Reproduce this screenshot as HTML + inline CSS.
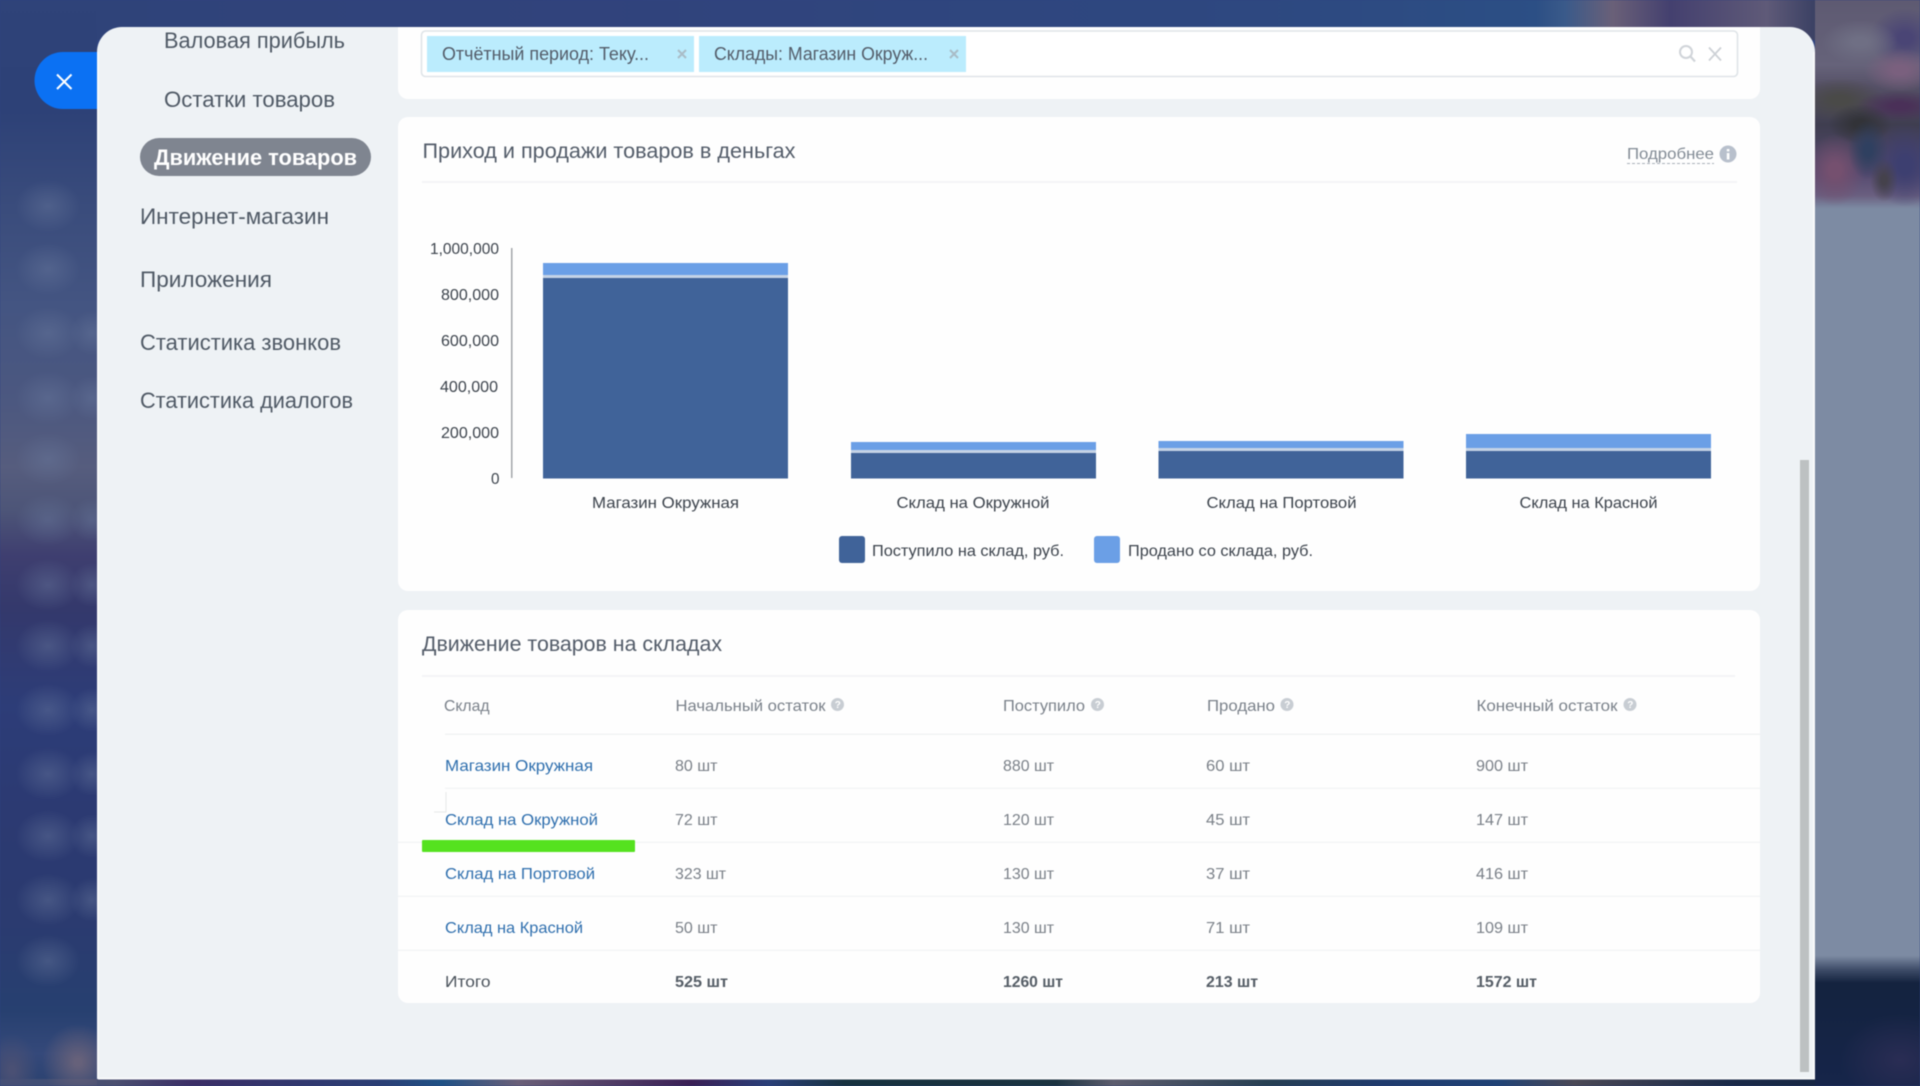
<!DOCTYPE html>
<html lang="ru">
<head>
<meta charset="utf-8">
<title>Движение товаров</title>
<style>
html,body{margin:0;padding:0;width:1920px;height:1086px;overflow:hidden;background:#2f4480}
svg{display:block;filter:blur(.45px)}
text{font-family:"Liberation Sans","DejaVu Sans",sans-serif}
.side{font-size:22px;fill:#4f5965}
.tag{font-size:18px;fill:#535c69}
.h{font-size:21px;fill:#535c69}
.ax{font-size:16px;fill:#3c434c}
.lb{font-size:16px;fill:#3c434c}
.th{font-size:16px;fill:#7a818a}
.td{font-size:16px;fill:#7a8088}
.a{font-size:16px;fill:#2f6fae}
.b{font-size:16px;fill:#555d66;font-weight:bold}
.q{font-size:10px;fill:#fff;font-weight:bold}
</style>
</head>
<body>
<svg width="1920" height="1086" viewBox="0 0 1920 1086" xmlns="http://www.w3.org/2000/svg">
<defs>
<linearGradient id="left" x1="0" y1="0" x2="0" y2="1">
<stop offset="0" stop-color="#2f4379"/>
<stop offset=".1" stop-color="#2d4177"/>
<stop offset=".19" stop-color="#3a4c7c"/>
<stop offset=".28" stop-color="#445582"/>
<stop offset=".37" stop-color="#4c5880"/>
<stop offset=".43" stop-color="#565d7e"/>
<stop offset=".47" stop-color="#4d5578"/>
<stop offset=".51" stop-color="#3f3f70"/>
<stop offset=".56" stop-color="#34396c"/>
<stop offset=".65" stop-color="#2d3d78"/>
<stop offset=".75" stop-color="#2c3a72"/>
<stop offset=".85" stop-color="#2b3b70"/>
<stop offset=".93" stop-color="#274070"/>
<stop offset=".97" stop-color="#35497a"/>
<stop offset="1" stop-color="#2b4270"/>
</linearGradient>
<linearGradient id="top" x1="0" y1="0" x2="1" y2="0">
<stop offset="0" stop-color="#2f4379"/>
<stop offset=".3" stop-color="#31437c"/>
<stop offset=".65" stop-color="#2e4880"/>
<stop offset=".8" stop-color="#2c4f85"/>
<stop offset=".815" stop-color="#3a5a8a"/>
<stop offset=".84" stop-color="#6a6078"/>
<stop offset=".87" stop-color="#44406f"/>
<stop offset=".92" stop-color="#5f5a78"/>
<stop offset=".95" stop-color="#343c60"/>
<stop offset="1" stop-color="#5a5a74"/>
</linearGradient>
<linearGradient id="bot" x1="0" y1="0" x2="1" y2="0">
<stop offset="0" stop-color="#3c4f78"/>
<stop offset=".06" stop-color="#4b4f70"/>
<stop offset=".1" stop-color="#3b2e66"/>
<stop offset=".2" stop-color="#2a3f75"/>
<stop offset=".23" stop-color="#1f5185"/>
<stop offset=".27" stop-color="#6a5f78"/>
<stop offset=".36" stop-color="#3a1f55"/>
<stop offset=".4" stop-color="#2a3f78"/>
<stop offset=".44" stop-color="#17323f"/>
<stop offset=".55" stop-color="#1b3340"/>
<stop offset=".58" stop-color="#5d5d6e"/>
<stop offset=".66" stop-color="#273f52"/>
<stop offset=".72" stop-color="#1f3b6d"/>
<stop offset=".78" stop-color="#1f4275"/>
<stop offset=".82" stop-color="#4a4855"/>
<stop offset=".9" stop-color="#1a2a48"/>
<stop offset="1" stop-color="#14233f"/>
</linearGradient>
<linearGradient id="rcol" x1="0" y1="0" x2="0" y2="1">
<stop offset="0" stop-color="#5e5a72"/>
<stop offset=".06" stop-color="#66637a"/>
<stop offset=".08" stop-color="#555066"/>
<stop offset=".115" stop-color="#3f3e50"/>
<stop offset=".16" stop-color="#564a70"/>
<stop offset=".18" stop-color="#6a5f80"/>
<stop offset=".192" stop-color="#7d8ba3"/>
<stop offset=".88" stop-color="#7d8ba3"/>
<stop offset=".893" stop-color="#3e4c68"/>
<stop offset=".905" stop-color="#14233f"/>
<stop offset="1" stop-color="#16254a"/>
</linearGradient>
<radialGradient id="blob"><stop offset="0" stop-color="#6b7b9f" stop-opacity=".42"/><stop offset=".5" stop-color="#6b7b9f" stop-opacity=".22"/><stop offset="1" stop-color="#6b7b9f" stop-opacity="0"/></radialGradient>
<radialGradient id="g1"><stop offset=".2" stop-color="#4a4575"/><stop offset="1" stop-color="#4a4575" stop-opacity="0"/></radialGradient>
<radialGradient id="g2"><stop offset=".2" stop-color="#6f6f84"/><stop offset="1" stop-color="#6f6f84" stop-opacity="0"/></radialGradient>
<radialGradient id="g3"><stop offset=".2" stop-color="#7a607e"/><stop offset="1" stop-color="#7a607e" stop-opacity="0"/></radialGradient>
<radialGradient id="g4"><stop offset=".2" stop-color="#4a4a48"/><stop offset="1" stop-color="#4a4a48" stop-opacity="0"/></radialGradient>
<radialGradient id="g5"><stop offset=".2" stop-color="#4a3058"/><stop offset="1" stop-color="#4a3058" stop-opacity="0"/></radialGradient>
<radialGradient id="g6"><stop offset=".2" stop-color="#323338"/><stop offset="1" stop-color="#323338" stop-opacity="0"/></radialGradient>
<radialGradient id="g7"><stop offset=".2" stop-color="#2f4060"/><stop offset="1" stop-color="#2f4060" stop-opacity="0"/></radialGradient>
<radialGradient id="g8"><stop offset=".2" stop-color="#3d3f70"/><stop offset="1" stop-color="#3d3f70" stop-opacity="0"/></radialGradient>
<radialGradient id="g9"><stop offset=".2" stop-color="#75506f"/><stop offset="1" stop-color="#75506f" stop-opacity="0"/></radialGradient>
<radialGradient id="g10"><stop offset=".2" stop-color="#45424c"/><stop offset="1" stop-color="#45424c" stop-opacity="0"/></radialGradient>
<radialGradient id="g11"><stop offset=".1" stop-color="#66617a"/><stop offset="1" stop-color="#66617a" stop-opacity="0"/></radialGradient>
<radialGradient id="g12"><stop offset=".1" stop-color="#4a5074"/><stop offset="1" stop-color="#4a5074" stop-opacity="0"/></radialGradient>
<radialGradient id="g13"><stop offset="0" stop-color="#2a2d54"/><stop offset="1" stop-color="#2a2d54" stop-opacity="0"/></radialGradient>
<clipPath id="panel"><path d="M97 1079V52a25 25 0 0 1 25-25H1790a25 25 0 0 1 25 25V1079Z"/></clipPath>
<clipPath id="right"><rect x="1815" y="0" width="105" height="1086"/></clipPath>
<clipPath id="rtop"><rect x="1815" y="0" width="105" height="206"/></clipPath>
<clipPath id="leftc"><rect x="0" y="0" width="97" height="1086"/></clipPath>
</defs>

<!-- background -->
<rect width="1920" height="1086" fill="#2f4480"/>
<rect x="0" y="0" width="1920" height="40" fill="url(#top)"/>
<rect x="0" y="0" width="97" height="1086" fill="url(#left)"/>
<rect x="0" y="1079" width="1920" height="7" fill="url(#bot)"/>
<g clip-path="url(#leftc)" fill="url(#blob)">
<ellipse cx="48" cy="206" rx="32" ry="26"/><ellipse cx="48" cy="269" rx="32" ry="26"/><ellipse cx="48" cy="333" rx="32" ry="26"/><ellipse cx="48" cy="398" rx="32" ry="26"/>
<ellipse cx="48" cy="459" rx="32" ry="26"/><ellipse cx="48" cy="520" rx="32" ry="26"/><ellipse cx="48" cy="585" rx="32" ry="26"/><ellipse cx="48" cy="646" rx="32" ry="26"/>
<ellipse cx="48" cy="710" rx="32" ry="26"/><ellipse cx="48" cy="774" rx="32" ry="26"/><ellipse cx="48" cy="836" rx="32" ry="26"/><ellipse cx="48" cy="900" rx="32" ry="26"/><ellipse cx="48" cy="961" rx="32" ry="26"/>
<ellipse cx="92" cy="333" rx="22" ry="22"/><ellipse cx="92" cy="398" rx="22" ry="22"/><ellipse cx="92" cy="520" rx="22" ry="22"/><ellipse cx="92" cy="585" rx="22" ry="22"/><ellipse cx="92" cy="646" rx="22" ry="22"/><ellipse cx="92" cy="710" rx="22" ry="22"/><ellipse cx="92" cy="774" rx="22" ry="22"/><ellipse cx="92" cy="836" rx="22" ry="22"/><ellipse cx="92" cy="900" rx="22" ry="22"/>
</g>
<g clip-path="url(#leftc)">
<ellipse cx="78" cy="1062" rx="36" ry="38" fill="url(#g11)"/>
<ellipse cx="12" cy="1070" rx="26" ry="36" fill="url(#g12)"/>
</g>
<g clip-path="url(#right)">
<rect x="1815" y="0" width="105" height="1086" fill="url(#rcol)"/>
<ellipse cx="1900" cy="1060" rx="60" ry="45" fill="url(#g13)"/>
</g>
<g clip-path="url(#rtop)">
<ellipse cx="1905" cy="38" rx="36" ry="30" fill="url(#g1)"/>
<ellipse cx="1860" cy="42" rx="38" ry="22" fill="url(#g2)"/>
<ellipse cx="1900" cy="70" rx="36" ry="22" fill="url(#g3)"/>
<ellipse cx="1840" cy="100" rx="44" ry="22" fill="url(#g4)"/>
<ellipse cx="1900" cy="106" rx="44" ry="16" fill="url(#g5)"/>
<ellipse cx="1860" cy="124" rx="32" ry="20" fill="url(#g6)"/>
<ellipse cx="1835" cy="170" rx="30" ry="36" fill="url(#g9)"/>
<ellipse cx="1905" cy="165" rx="34" ry="42" fill="url(#g8)"/>
<ellipse cx="1868" cy="150" rx="20" ry="30" fill="url(#g7)"/>
<ellipse cx="1884" cy="180" rx="14" ry="22" fill="url(#g10)"/>
</g>

<!-- close button -->
<path d="M97 52H63a28.500 28.500 0 0 0 0 57H97Z" fill="#0b71f3"/>
<path d="M57 74.500L71.500 89M71.500 74.500L57 89" stroke="#fff" stroke-width="2" fill="none"/>

<!-- panel -->
<path d="M97 1079V52a25 25 0 0 1 25-25H1790a25 25 0 0 1 25 25V1079Z" fill="#eef2f5"/>
<path d="M98 1078.500V52M1814 52V1078.500H98" stroke="#f8f9fa" stroke-width="2" fill="none"/>

<g clip-path="url(#panel)">
<!-- sidebar -->
<text class="side" x="164" y="48" textLength="181" lengthAdjust="spacingAndGlyphs">Валовая прибыль</text>
<text class="side" x="164" y="107" textLength="171" lengthAdjust="spacingAndGlyphs">Остатки товаров</text>
<rect x="140" y="138" width="231" height="38" rx="19" fill="#7f8590"/>
<text class="side" x="154" y="165" textLength="203" lengthAdjust="spacingAndGlyphs" style="fill:#fff;font-weight:bold">Движение товаров</text>
<text class="side" x="140" y="224" textLength="189" lengthAdjust="spacingAndGlyphs">Интернет-магазин</text>
<text class="side" x="140" y="287" textLength="132" lengthAdjust="spacingAndGlyphs">Приложения</text>
<text class="side" x="140" y="350" textLength="201" lengthAdjust="spacingAndGlyphs">Статистика звонков</text>
<text class="side" x="140" y="408" textLength="213" lengthAdjust="spacingAndGlyphs">Статистика диалогов</text>

<!-- filter card -->
<path d="M398 27H1760V89a10 10 0 0 1-10 10H408a10 10 0 0 1-10-10Z" fill="#fefefe"/>
<rect x="421.500" y="31" width="1316" height="45.500" rx="4" fill="#fff" stroke="#dfe4e8" stroke-width="1.600"/>
<rect x="427" y="36" width="267" height="36" fill="#bbecfd"/>
<text class="tag" x="442" y="60" textLength="207" lengthAdjust="spacingAndGlyphs">Отчётный период: Теку...</text>
<path d="M678 50L686 58M686 50L678 58" stroke="#a9bcc6" stroke-width="2"/>
<rect x="699" y="36" width="267" height="36" fill="#bbecfd"/>
<text class="tag" x="714" y="60" textLength="214" lengthAdjust="spacingAndGlyphs">Склады: Магазин Окруж...</text>
<path d="M950 50L958 58M958 50L950 58" stroke="#a9bcc6" stroke-width="2"/>
<circle cx="1686" cy="52" r="6" fill="none" stroke="#d0d4d9" stroke-width="2"/>
<path d="M1690.500 56.500L1695 61.500" stroke="#d0d4d9" stroke-width="2.200"/>
<path d="M1709 47.500L1721 60.500M1721 47.500L1709 60.500" stroke="#cdd1d6" stroke-width="1.800"/>

<!-- chart card -->
<rect x="398" y="117" width="1362" height="474" rx="10" fill="#fefefe"/>
<text class="h" x="422.500" y="158" textLength="373" lengthAdjust="spacingAndGlyphs">Приход и продажи товаров в деньгах</text>
<text x="1627" y="159" font-size="16" fill="#828b95" textLength="87" lengthAdjust="spacingAndGlyphs">Подробнее</text>
<path d="M1627 163.500H1714" stroke="#a8afb8" stroke-width="1" stroke-dasharray="3 2"/>
<circle cx="1728" cy="154" r="8.500" fill="#b8c0cc"/>
<rect x="1726.800" y="153" width="2.600" height="6.500" fill="#fff"/><rect x="1726.800" y="149" width="2.600" height="2.400" fill="#fff"/>
<rect x="422" y="181" width="1315" height="2" fill="#f3f4f6"/>

<rect x="511" y="248" width="1.500" height="230" fill="#a3a6aa"/>
<text class="ax" x="430" y="254" textLength="69" lengthAdjust="spacingAndGlyphs">1,000,000</text>
<text class="ax" x="441" y="300" textLength="58" lengthAdjust="spacingAndGlyphs">800,000</text>
<text class="ax" x="441" y="346" textLength="58" lengthAdjust="spacingAndGlyphs">600,000</text>
<text class="ax" x="440" y="392" textLength="58" lengthAdjust="spacingAndGlyphs">400,000</text>
<text class="ax" x="441" y="438" textLength="58" lengthAdjust="spacingAndGlyphs">200,000</text>
<text class="ax" x="491" y="484" textLength="8.500" lengthAdjust="spacingAndGlyphs">0</text>
<rect x="543" y="263" width="245" height="12" fill="#6b9fe6"/><rect x="543" y="278" width="245" height="200.500" fill="#406399"/>
<rect x="851" y="442" width="245" height="8" fill="#6b9fe6"/><rect x="851" y="453" width="245" height="25.500" fill="#406399"/>
<rect x="1158.500" y="441" width="245" height="7" fill="#6b9fe6"/><rect x="1158.500" y="451" width="245" height="27.500" fill="#406399"/>
<rect x="1466" y="434" width="245" height="14" fill="#6b9fe6"/><rect x="1466" y="451" width="245" height="27.500" fill="#406399"/>
<rect x="543" y="275" width="245" height="3" fill="#c5d3e6"/><rect x="851" y="450" width="245" height="3" fill="#c5d3e6"/><rect x="1158.500" y="448" width="245" height="3" fill="#c5d3e6"/><rect x="1466" y="448" width="245" height="3" fill="#c5d3e6"/>

<text class="lb" x="592" y="508" textLength="147" lengthAdjust="spacingAndGlyphs">Магазин Окружная</text>
<text class="lb" x="896.500" y="508" textLength="153" lengthAdjust="spacingAndGlyphs">Склад на Окружной</text>
<text class="lb" x="1206.500" y="508" textLength="150" lengthAdjust="spacingAndGlyphs">Склад на Портовой</text>
<text class="lb" x="1519.500" y="508" textLength="138" lengthAdjust="spacingAndGlyphs">Склад на Красной</text>

<rect x="839" y="536" width="26" height="27" rx="3" fill="#406399"/>
<text class="lb" x="872" y="556" textLength="192" lengthAdjust="spacingAndGlyphs">Поступило на склад, руб.</text>
<rect x="1094" y="536" width="26" height="27" rx="3" fill="#6b9fe6"/>
<text class="lb" x="1128" y="556" textLength="185" lengthAdjust="spacingAndGlyphs">Продано со склада, руб.</text>

<!-- table card -->
<rect x="398" y="610" width="1362" height="393" rx="10" fill="#fefefe"/>
<text class="h" x="422" y="651" textLength="300" lengthAdjust="spacingAndGlyphs">Движение товаров на складах</text>
<rect x="422" y="675" width="1313" height="2" fill="#f3f4f6"/>

<text class="th" x="444" y="711" textLength="45.500" lengthAdjust="spacingAndGlyphs">Склад</text>
<text class="th" x="675.500" y="711" textLength="150" lengthAdjust="spacingAndGlyphs">Начальный остаток</text>
<circle cx="837.500" cy="704.500" r="6.500" fill="#c8cdd3"/><text class="q" x="834.800" y="708">?</text>
<text class="th" x="1003" y="711" textLength="82" lengthAdjust="spacingAndGlyphs">Поступило</text>
<circle cx="1097.500" cy="704.500" r="6.500" fill="#c8cdd3"/><text class="q" x="1094.800" y="708">?</text>
<text class="th" x="1207" y="711" textLength="68" lengthAdjust="spacingAndGlyphs">Продано</text>
<circle cx="1287" cy="704.500" r="6.500" fill="#c8cdd3"/><text class="q" x="1284.300" y="708">?</text>
<text class="th" x="1476.500" y="711" textLength="141" lengthAdjust="spacingAndGlyphs">Конечный остаток</text>
<circle cx="1630" cy="704.500" r="6.500" fill="#c8cdd3"/><text class="q" x="1627.300" y="708">?</text>

<rect x="445" y="733.500" width="1315" height="1.500" fill="#f1f3f4"/>
<rect x="445" y="787.500" width="1315" height="1.500" fill="#f4f5f6"/>
<rect x="398" y="841.500" width="1362" height="1.500" fill="#f4f5f6"/>
<rect x="398" y="895.500" width="1362" height="1.500" fill="#f4f5f6"/>
<rect x="398" y="949.500" width="1362" height="1.500" fill="#f4f5f6"/>

<text class="a" x="445" y="771" textLength="148" lengthAdjust="spacingAndGlyphs">Магазин Окружная</text>
<text class="td" x="675" y="771" textLength="42.500" lengthAdjust="spacingAndGlyphs">80 шт</text>
<text class="td" x="1003" y="771" textLength="51" lengthAdjust="spacingAndGlyphs">880 шт</text>
<text class="td" x="1206" y="771" textLength="44" lengthAdjust="spacingAndGlyphs">60 шт</text>
<text class="td" x="1476" y="771" textLength="52" lengthAdjust="spacingAndGlyphs">900 шт</text>

<text class="a" x="445" y="825" textLength="153" lengthAdjust="spacingAndGlyphs">Склад на Окружной</text>
<text class="td" x="675" y="825" textLength="42.500" lengthAdjust="spacingAndGlyphs">72 шт</text>
<text class="td" x="1003" y="825" textLength="51" lengthAdjust="spacingAndGlyphs">120 шт</text>
<text class="td" x="1206" y="825" textLength="44" lengthAdjust="spacingAndGlyphs">45 шт</text>
<text class="td" x="1476" y="825" textLength="52" lengthAdjust="spacingAndGlyphs">147 шт</text>

<text class="a" x="445" y="879" textLength="150" lengthAdjust="spacingAndGlyphs">Склад на Портовой</text>
<text class="td" x="675" y="879" textLength="51" lengthAdjust="spacingAndGlyphs">323 шт</text>
<text class="td" x="1003" y="879" textLength="51" lengthAdjust="spacingAndGlyphs">130 шт</text>
<text class="td" x="1206" y="879" textLength="44" lengthAdjust="spacingAndGlyphs">37 шт</text>
<text class="td" x="1476" y="879" textLength="52" lengthAdjust="spacingAndGlyphs">416 шт</text>

<text class="a" x="445" y="933" textLength="138" lengthAdjust="spacingAndGlyphs">Склад на Красной</text>
<text class="td" x="675" y="933" textLength="42.500" lengthAdjust="spacingAndGlyphs">50 шт</text>
<text class="td" x="1003" y="933" textLength="51" lengthAdjust="spacingAndGlyphs">130 шт</text>
<text class="td" x="1206" y="933" textLength="44" lengthAdjust="spacingAndGlyphs">71 шт</text>
<text class="td" x="1476" y="933" textLength="52" lengthAdjust="spacingAndGlyphs">109 шт</text>

<text class="b" x="445" y="987" textLength="45.500" lengthAdjust="spacingAndGlyphs" style="font-weight:normal;fill:#4a525b">Итого</text>
<text class="b" x="675" y="987" textLength="53" lengthAdjust="spacingAndGlyphs">525 шт</text>
<text class="b" x="1003" y="987" textLength="60" lengthAdjust="spacingAndGlyphs">1260 шт</text>
<text class="b" x="1206" y="987" textLength="52" lengthAdjust="spacingAndGlyphs">213 шт</text>
<text class="b" x="1476" y="987" textLength="61" lengthAdjust="spacingAndGlyphs">1572 шт</text>

<!-- highlight -->
<rect x="422" y="840" width="213" height="12" rx="1" fill="#55e21f"/>
<path d="M446 792V812H434" fill="none" stroke="#e6e9e8" stroke-width="1"/>

<!-- scrollbar -->
<rect x="1800" y="460" width="9" height="612" fill="#bdc1c2"/>
</g>
</svg>
</body>
</html>
